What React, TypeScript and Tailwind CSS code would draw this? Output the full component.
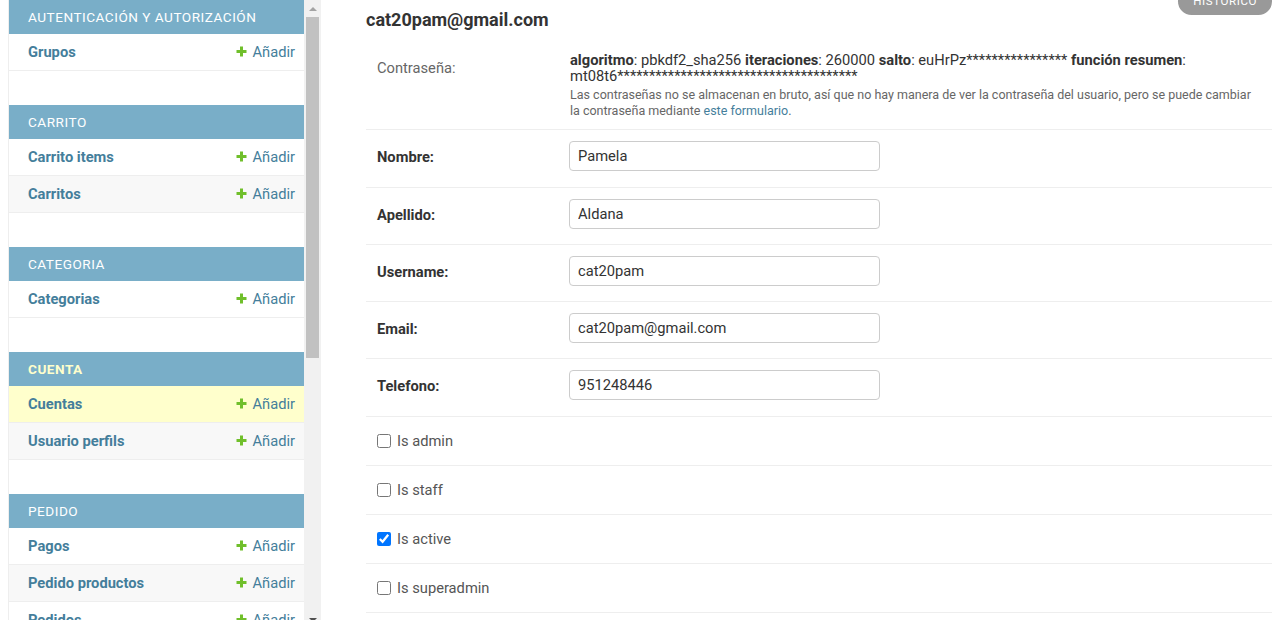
import React from "react";

type Model = { name: string; current?: boolean };
type Module = { title: string; current?: boolean; models: Model[] };

const modules: Module[] = [
  { title: "Autenticación y autorización", models: [{ name: "Grupos" }] },
  { title: "Carrito", models: [{ name: "Carrito items" }, { name: "Carritos" }] },
  { title: "Categoria", models: [{ name: "Categorias" }] },
  {
    title: "Cuenta",
    current: true,
    models: [{ name: "Cuentas", current: true }, { name: "Usuario perfils" }],
  },
  {
    title: "Pedido",
    models: [{ name: "Pagos" }, { name: "Pedido productos" }, { name: "Pedidos" }],
  },
];

function PlusIcon() {
  return (
    <svg width="11" height="11" viewBox="0 0 11 11">
      <path d="M5.5 0.5v10M0.5 5.5h10" stroke="#70bf2b" strokeWidth="3" />
    </svg>
  );
}

function Sidebar() {
  return (
    <div className="ml-2 flex h-[628px] shrink-0 border-l border-[#eee]">
      <nav className="w-[295px]">
        {modules.map((m) => (
          <div key={m.title} className="mb-[34px]">
            <div
              className={
                "flex h-[34px] items-center bg-[#79aec8] pl-[19px] text-[13.6px] uppercase tracking-[0.5px] " +
                (m.current ? "font-bold text-[#ffc]" : "text-white")
              }
            >
              {m.title}
            </div>
            {m.models.map((row, i) => (
              <div
                key={row.name}
                className={
                  "flex h-[37px] items-center justify-between border-b border-[#eee] pl-[19px] pr-[9px] text-[14.7px] " +
                  (row.current ? "bg-[#ffc]" : i % 2 === 1 ? "bg-[#f8f8f8]" : "bg-white")
                }
              >
                <a className="font-bold text-[#447e9b]">{row.name}</a>
                <a className="flex items-center gap-[5px] text-[#447e9b]">
                  <PlusIcon />
                  Añadir
                </a>
              </div>
            ))}
          </div>
        ))}
      </nav>
      {/* scrollbar */}
      <div className="flex w-[17px] flex-col bg-[#f1f1f1]">
        <div className="flex h-[17px] items-center justify-center">
          <div className="h-0 w-0 border-x-[4px] border-b-[4px] border-x-transparent border-b-[#a3a3a3]" />
        </div>
        <div className="flex-1">
          <div className="mx-[2px] h-[341px] bg-[#c1c1c1]" />
        </div>
        <div className="flex h-[17px] items-center justify-center">
          <div className="h-0 w-0 border-x-[4px] border-t-[4px] border-x-transparent border-t-[#505050]" />
        </div>
      </div>
    </div>
  );
}

function TextRow({ label, value, tall }: { label: string; value: string; tall?: boolean }) {
  return (
    <div
      className={
        "flex items-center border-b border-[#eee] pl-[11px] pr-[10px] pt-[11px] " +
        (tall ? "pb-[16px]" : "pb-[15px]")
      }
    >
      <label className="w-[192px] pt-[3px] text-[14.7px] font-bold text-[#333]">{label}</label>
      <input
        defaultValue={value}
        className="h-[30px] w-[311px] rounded-[4px] border border-[#ccc] px-[8px] text-[14.7px] text-[#333] outline-none"
      />
    </div>
  );
}

function CheckRow({ label, checked }: { label: string; checked?: boolean }) {
  return (
    <div className="flex h-[49px] items-center gap-[6px] border-b border-[#eee] pl-[11px]">
      <input type="checkbox" defaultChecked={checked} className="m-0 h-[14px] w-[14px]" />
      <label className="text-[14.7px] text-[#555]">{label}</label>
    </div>
  );
}

export default function App() {
  return (
    <div className="flex h-[620px] overflow-hidden bg-white font-['Roboto','Liberation_Sans',sans-serif] text-[#333]">
      <Sidebar />
      <main className="min-w-0 flex-1 pl-[45px] pr-2">
        <div className="flex h-[40px] items-start justify-between">
          <h2 className="mt-[9px] text-[18px] font-bold leading-[22px] text-[#333]">cat20pam@gmail.com</h2>
          <a className="-mt-[12px] flex h-[27px] items-center rounded-full bg-[#999] px-[15px] text-[11.5px] uppercase tracking-[0.6px] text-white">
            Histórico
          </a>
        </div>

        <div className="flex border-b border-[#eee] pb-[10px] pl-[11px] pr-[10px] pt-[12px]">
          <label className="w-[193px] shrink-0 pt-[8px] text-[14.7px] leading-[16px] text-[#666]">Contraseña:</label>
          <div className="min-w-0 flex-1">
            <div className="text-[14.7px] leading-[16px] text-[#333]">
              <strong>algoritmo</strong>: pbkdf2_sha256 <strong>iteraciones</strong>: 260000{" "}
              <strong>salto</strong>: euHrPz**************** <strong>función resumen</strong>:{" "}
              mt08t6**************************************
            </div>
            <p className="mt-[3px] text-[12.5px] leading-[16px] text-[#666]">
              Las contraseñas no se almacenan en bruto, así que no hay manera de ver la contraseña del
              usuario, pero se puede cambiar la contraseña mediante{" "}
              <a className="text-[#447e9b]">este formulario</a>.
            </p>
          </div>
        </div>

        <TextRow label="Nombre:" value="Pamela" tall />
        <TextRow label="Apellido:" value="Aldana" />
        <TextRow label="Username:" value="cat20pam" />
        <TextRow label="Email:" value="cat20pam@gmail.com" />
        <TextRow label="Telefono:" value="951248446" tall />

        <CheckRow label="Is admin" />
        <CheckRow label="Is staff" />
        <CheckRow label="Is active" checked />
        <CheckRow label="Is superadmin" />
      </main>
    </div>
  );
}
